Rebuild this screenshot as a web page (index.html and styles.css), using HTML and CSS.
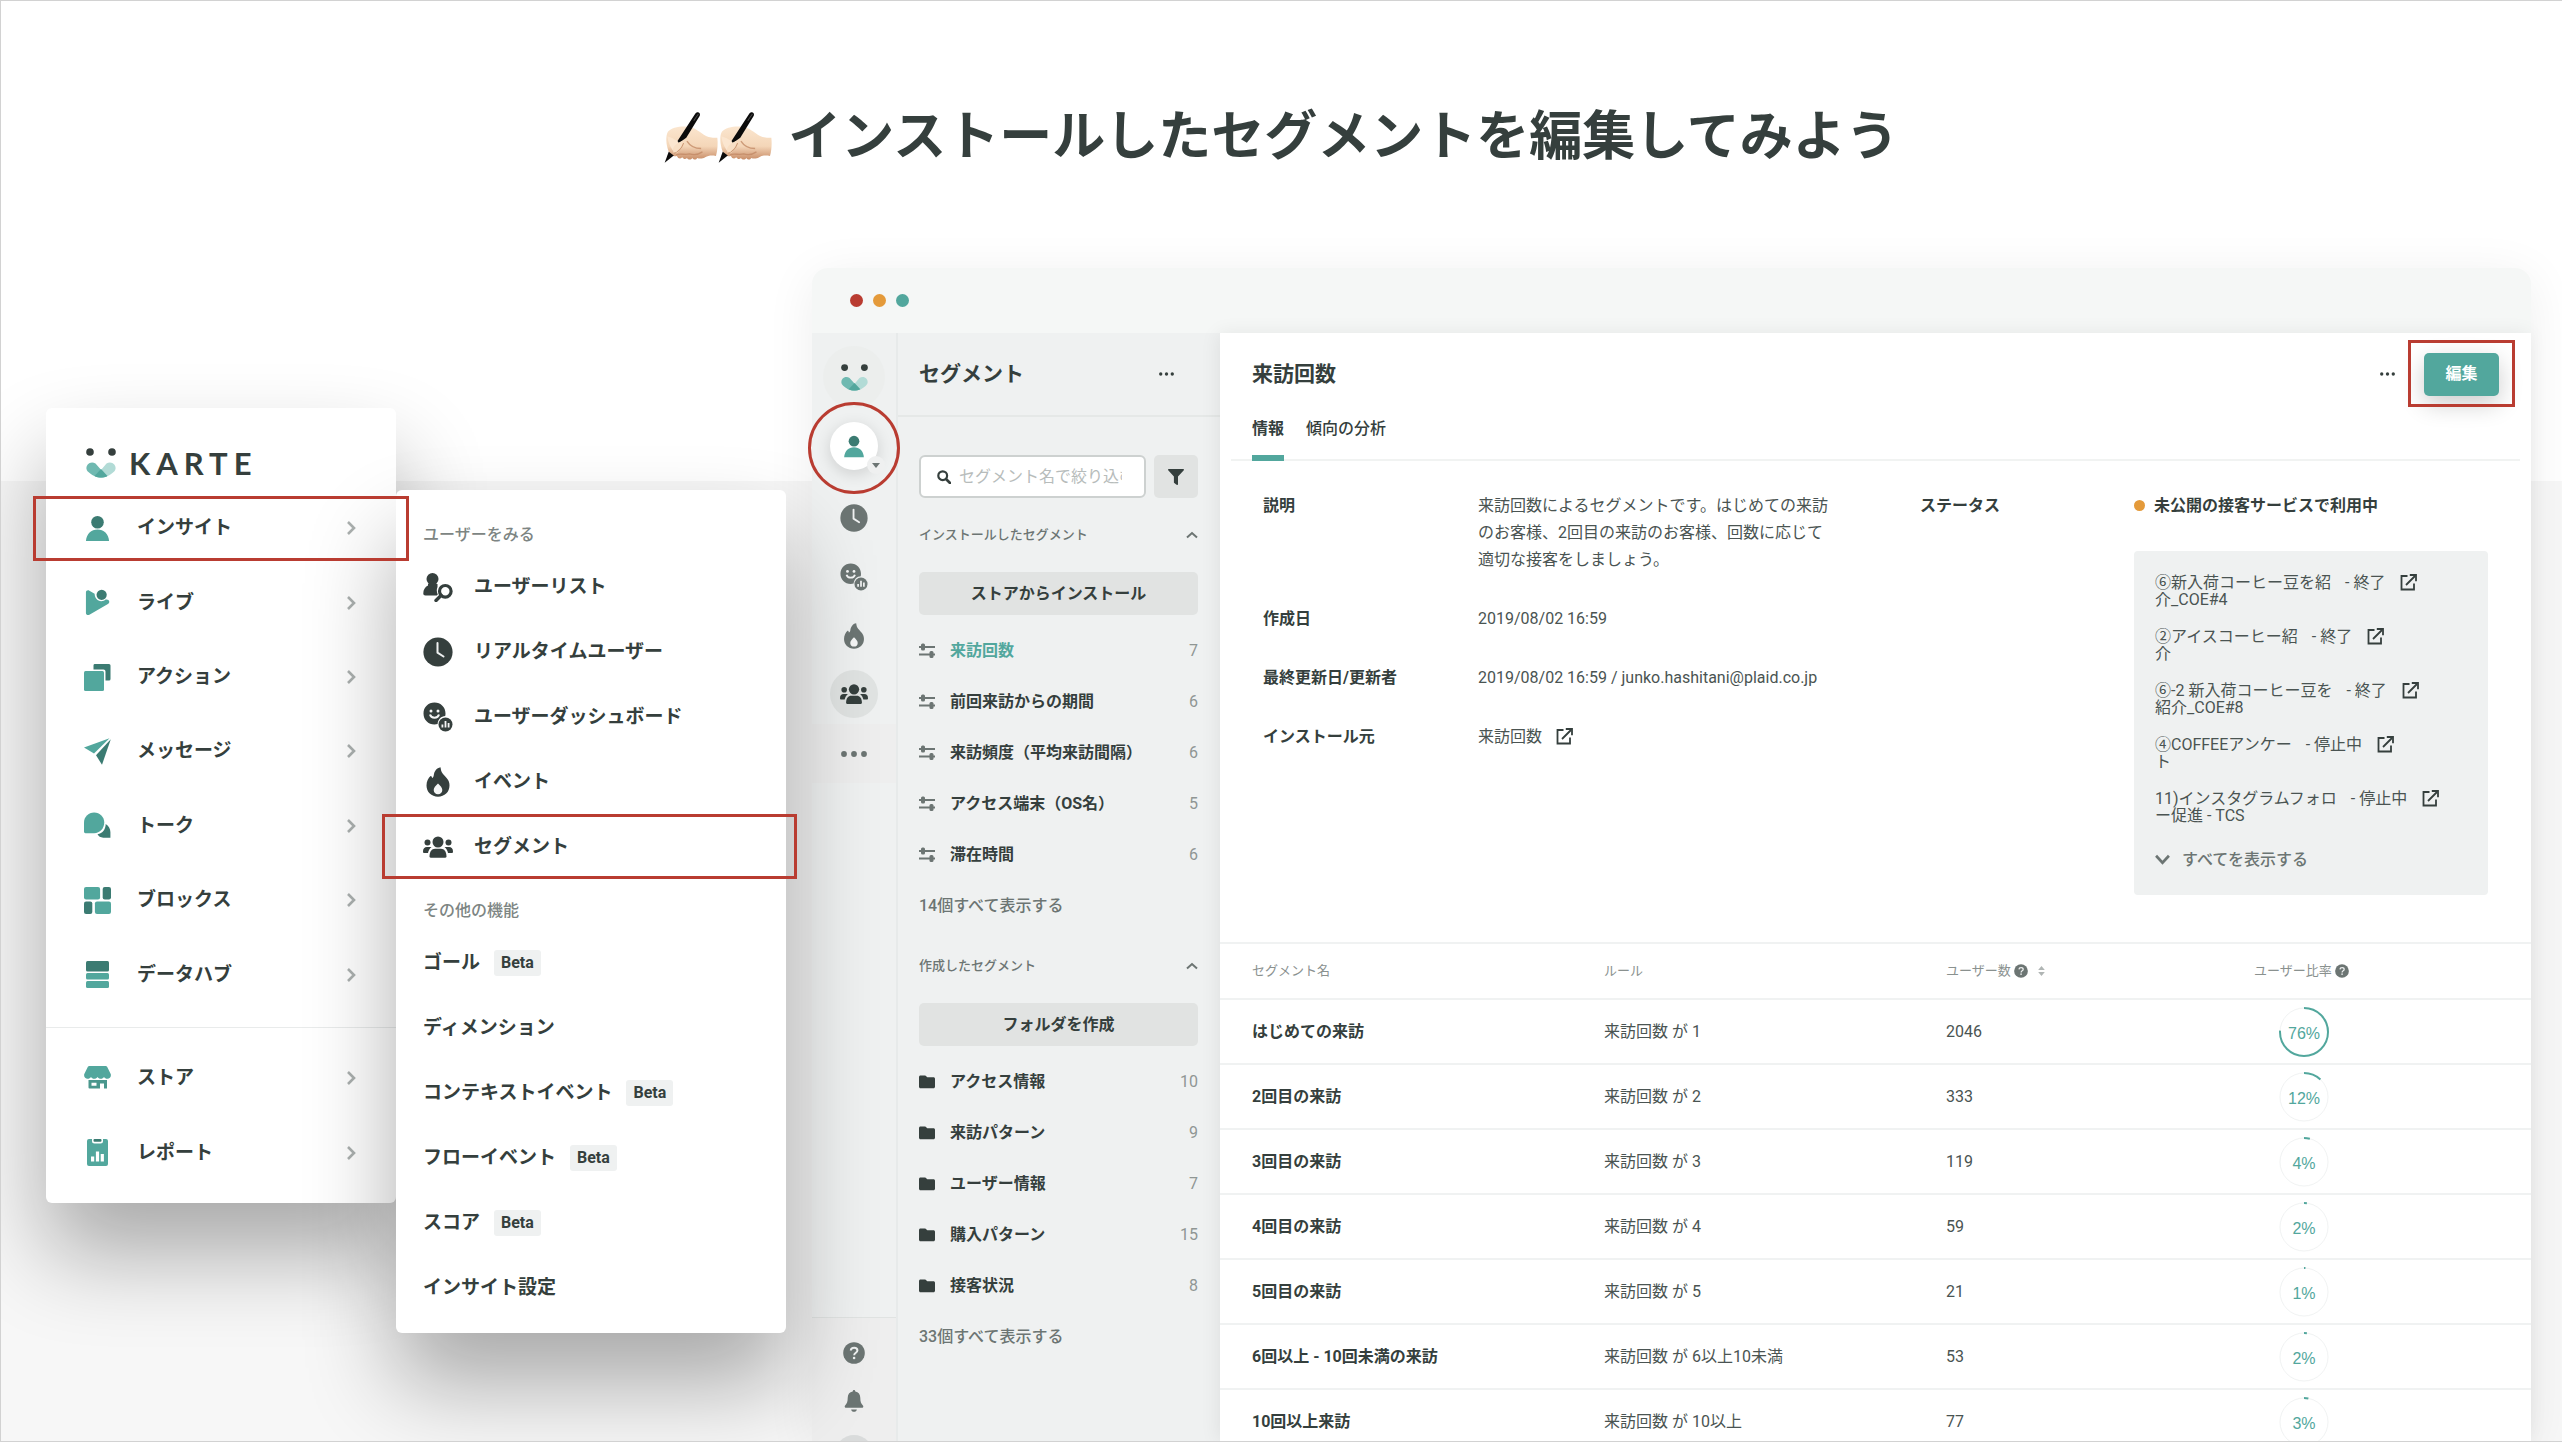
FILE: index.html
```html
<!DOCTYPE html>
<html lang="ja">
<head>
<meta charset="utf-8">
<meta name="viewport" content="width=device-width, initial-scale=1">
<title>インストールしたセグメントを編集してみよう</title>
<link rel="stylesheet" href="styles.css">
</head>
<body>
<svg class="sprite" aria-hidden="true">
  <symbol id="smile" viewBox="0 0 30 30">
    <circle cx="4" cy="4" r="3.8" fill="#353f3d"/><circle cx="26" cy="4" r="3.8" fill="#353f3d"/>
    <path d="M20.5 15.6c2.500-2 6-1.400 7.800.8 2 2.600 1.700 5.600-.7 7.700C24.500 27 20.500 29.500 15 29.500c-2 0-4-.4-5.500-1z" fill="#b2dbd6"/>
    <path d="M9.500 15.600c-2.500-2-6-1.400-7.800.8-2 2.600-1.700 5.600.7 7.700C5.500 27 9.500 29.500 15 29.500c2 0 4-.4 5.900-1.100z" fill="#6fb9b1"/>
    <path d="M15 21l6.500 7c-4 2-9.500 2-13 0z" fill="#52a79d"/>
  </symbol>
  <symbol id="person" viewBox="0 0 24 28">
    <circle cx="12" cy="7.500" r="6.500" fill="#3b7b72"/>
    <path d="M0 27c.5-7.500 5.500-12 12-12s11.500 4.500 12 12z" fill="#52a79d"/>
  </symbol>
  <symbol id="live" viewBox="0 0 26 28">
    <path d="M1 3.500C1 1.500 3 .8 4.600 1.700L10 5c.2 4.500 3 7.600 6.800 7.600 2 0 3.500-.6 4.500-1.600 2-.6 3.700.5 3.900 2 .1 1.200-.4 2-1.400 2.600L4.600 26.700C3 27.600 1 26.800 1 24.800z" fill="#52a79d"/>
    <circle cx="17.300" cy="6" r="5.300" fill="#3b7b72"/>
  </symbol>
  <symbol id="action" viewBox="0 0 27 27">
    <path d="M10.500 0h14.500a1.500 1.500 0 0 1 1.500 1.500V15a1.500 1.500 0 0 1-1.500 1.500h-3.500V7.500a2 2 0 0 0-2-2H9.500V1.500A1.500 1.500 0 0 1 10.500 0z" fill="#3b7b72"/>
    <rect y="7" width="20" height="20" rx="1.500" fill="#52a79d"/>
  </symbol>
  <symbol id="message" viewBox="0 0 27 27">
    <path d="M0 9.500L25.500.3 10 15.500z" fill="#52a79d"/>
    <path d="M26.800 1.200L18 26.800l-6-9.600z" fill="#3b7b72"/>
  </symbol>
  <symbol id="talk" viewBox="0 0 28 27">
    <path d="M22.500 12c3 2 4.900 5 4.900 8.500v5.700H20c-3 0-5-1.500-6-3.500 5.500-1 8.500-5.500 8.500-10.700z" fill="#3b7b72"/>
    <path d="M10.500 0C16.500 0 21 4.500 21 10.500S16.500 21.500 10.500 21.500H1.500A1.500 1.500 0 0 1 0 20V10.500C0 4.500 4.500 0 10.500 0z" fill="#52a79d"/>
  </symbol>
  <symbol id="blocks" viewBox="0 0 26 26">
    <rect width="15.500" height="12" rx="2" fill="#52a79d"/><rect x="18" width="8" height="12" rx="2" fill="#3b7b72"/>
    <rect y="14" width="8" height="12" rx="2" fill="#3b7b72"/><rect x="10.500" y="14" width="15.500" height="12" rx="2" fill="#52a79d"/>
  </symbol>
  <symbol id="datahub" viewBox="0 0 23 27">
    <rect width="23" height="10.500" rx="1.500" fill="#3b7b72"/><rect y="12" width="23" height="6.500" rx="1.500" fill="#52a79d"/><rect y="20" width="23" height="7" rx="1.500" fill="#52a79d"/>
  </symbol>
  <symbol id="store" viewBox="0 0 27 23">
    <path d="M4.500 14h18.500v8.500h-3V17.500h-4v5H5.500a1 1 0 0 1-1-1zM7.500 16.800v3h5v-3z" fill="#4a978d" fill-rule="evenodd"/>
    <path d="M5.500 0h16c1 0 1.500.5 2 1.500L26.700 8c.8 2.500-1 4.800-3.300 4.800-1.500 0-2.700-.7-3.400-1.800-.7 1.100-1.900 1.800-3.200 1.800s-2.600-.7-3.300-1.800c-.7 1.100-1.900 1.800-3.300 1.800S7.700 12.100 7 11c-.7 1.100-1.900 1.800-3.400 1.800C1.300 12.800-.5 10.500.3 8L3.500 1.500C4 .5 4.500 0 5.500 0z" fill="#52a79d"/>
  </symbol>
  <symbol id="report" viewBox="0 0 21 27">
    <path d="M2 0h3v2a2.500 2.500 0 0 0 2.500 2.500h6A2.500 2.500 0 0 0 16 2V0h3a2 2 0 0 1 2 2v23a2 2 0 0 1-2 2H2a2 2 0 0 1-2-2V2a2 2 0 0 1 2-2z" fill="#52a79d"/>
    <rect x="6.500" width="8" height="2.800" rx="1" fill="#3b7b72"/>
    <path d="M4 17.500h3.200v5H4zM8.900 12.500h3.200v10H8.900zM13.700 15h3.200v7.500h-3.200z" fill="#fff"/>
  </symbol>
  <symbol id="chev-right" viewBox="0 0 10 16"><path d="M2 2l6 6-6 6" fill="none" stroke="#abb0af" stroke-width="2.600"/></symbol>
  <symbol id="chev-up" viewBox="0 0 12 8"><path d="M1 6.500l5-4.500 5 4.500" fill="none" stroke="currentColor" stroke-width="2"/></symbol>
  <symbol id="chev-down" viewBox="0 0 14 10"><path d="M1 1.500l6 6.500 6-6.500" fill="none" stroke="currentColor" stroke-width="2.500"/></symbol>
  <symbol id="userlist" viewBox="0 0 30 30">
    <circle cx="9.500" cy="7" r="6" fill="currentColor"/>
    <path d="M5 12h9.500v3c-1 2-1 5 .3 7.500l-1 1H2.500C1 23.500.3 22.800.3 21.500c0-3.800 1.700-6.500 4.700-8z" fill="currentColor"/>
    <circle cx="22.300" cy="19.300" r="5.800" fill="none" stroke="currentColor" stroke-width="3.200"/>
    <path d="M18 23.500l-5 5" stroke="currentColor" stroke-width="3.400" stroke-linecap="round"/>
  </symbol>
  <symbol id="clock" viewBox="0 0 30 30">
    <circle cx="15" cy="15" r="14.600" fill="currentColor"/>
    <path d="M14.500 6v9.700l6 3.800" fill="none" stroke="#eff1f1" stroke-width="2" stroke-linejoin="round" stroke-linecap="round"/>
  </symbol>
  <symbol id="dash" viewBox="0 0 30 30">
    <path d="M11.500.5c6.300 0 11 4.700 11 11 0 .9-.1 1.800-.3 2.600-4 .2-7.200 3.200-7.600 7.900-1 .3-2 .5-3.100.5-6.300 0-11-4.700-11-11s4.700-11 11-11z" fill="currentColor"/>
    <circle cx="8" cy="9" r="1.500" fill="#f5f6f6"/><circle cx="15" cy="9" r="1.500" fill="#f5f6f6"/>
    <path d="M7 12.500c1.200 4.200 7.800 4.200 9 0" fill="none" stroke="#f5f6f6" stroke-width="2"/>
    <circle cx="22.500" cy="22.500" r="7" fill="currentColor"/>
    <path d="M18.500 22.500h1.800v3h-1.800zM21.600 19h1.800v6.500h-1.800zM24.700 21h1.800v4.500h-1.800z" fill="#f5f6f6"/>
  </symbol>
  <symbol id="flame" viewBox="0 0 24 30">
    <path d="M14.500.3C15 3 15 4.500 17 7c3 3.500 6.500 5.800 6.500 11.500C23.500 25 18.500 29.700 12 29.700S.5 25 .5 18.500C.5 14.500 2.300 11 4.500 9c1 0 1.500.8 1.500 2 1-.3 1.600-1.300 1.800-3C8.300 4.500 10.500 1 14.500.3z" fill="currentColor"/>
    <path d="M12 16.500c2.500 2.500 4.300 4.300 4.300 6.500 0 2.500-1.800 4.200-4.300 4.200S7.700 25.500 7.700 23c0-2.200 1.800-4 4.300-6.500z" fill="#f5f6f6"/>
  </symbol>
  <symbol id="group" viewBox="0 0 30 22">
    <circle cx="15" cy="6" r="5.500" fill="currentColor"/>
    <path d="M6.500 20.500C6.500 15.500 9 12.800 12 12.800h6c3 0 5.500 2.700 5.500 7.700 0 .7-.5 1.200-1.200 1.200H7.700c-.7 0-1.200-.5-1.200-1.200z" fill="currentColor"/>
    <circle cx="4.500" cy="6.500" r="3" fill="currentColor"/><circle cx="25.500" cy="6.500" r="3" fill="currentColor"/>
    <path d="M0 15.500C0 12.500 1.500 11 4 11h4.500C6.500 12.500 5.500 14.500 5 17H1.300C.5 17 0 16.500 0 15.500zM30 15.500C30 12.500 28.500 11 26 11h-4.500c2 1.500 3 3.500 3.500 6h3.700c.8 0 1.300-.5 1.300-1.500z" fill="currentColor"/>
  </symbol>
  <symbol id="dots" viewBox="0 0 26 6"><circle cx="3" cy="3" r="2.900" fill="currentColor"/><circle cx="13" cy="3" r="2.900" fill="currentColor"/><circle cx="23" cy="3" r="2.900" fill="currentColor"/></symbol>
  <symbol id="search" viewBox="0 0 14 14"><circle cx="5.700" cy="5.700" r="4.400" fill="none" stroke="currentColor" stroke-width="2.200"/><path d="M9 9l4 4" stroke="currentColor" stroke-width="2.600" stroke-linecap="round"/></symbol>
  <symbol id="filter" viewBox="0 0 16 16"><path d="M.8 0h14.400c.8 0 1 .8.6 1.300L10 7.500V15c0 .8-.8 1.200-1.500.8L6.300 14c-.3-.2-.4-.5-.4-.8V7.500L.2 1.300C-.2.8 0 0 .8 0z" fill="currentColor"/></symbol>
  <symbol id="sliders" viewBox="0 0 16 16"><path d="M0 4h16M0 11.500h16" stroke="currentColor" stroke-width="2"/><rect x="2" y=".5" width="4" height="7" rx="1.500" fill="currentColor"/><rect x="10.500" y="8" width="4" height="7" rx="1.500" fill="currentColor"/></symbol>
  <symbol id="folder" viewBox="0 0 16 13"><path d="M1.500 0h4.800l2 1.800h6.200c.8 0 1.500.6 1.500 1.500v8c0 .9-.7 1.500-1.500 1.500h-13C.7 12.800 0 12.200 0 11.300V1.500C0 .6.700 0 1.500 0z" fill="currentColor"/></symbol>
  <symbol id="external" viewBox="0 0 17 17"><path d="M7.500 2H1.500v13.500h12.500V9.500M6 11L15 2" fill="none" stroke="currentColor" stroke-width="1.800"/><path d="M9.800 1H16v6.200" fill="none" stroke="currentColor" stroke-width="1.800"/></symbol>
  <symbol id="help" viewBox="0 0 22 22"><circle cx="11" cy="11" r="10.800" fill="currentColor"/><path d="M7.800 8.500c.2-3.700 6.600-3.700 6.600 0 0 2.300-3.200 2.200-3.200 4.700" fill="none" stroke="#eff1f1" stroke-width="2"/><circle cx="11.100" cy="16" r="1.300" fill="#eff1f1"/></symbol>
  <symbol id="bell" viewBox="0 0 18 21"><path d="M9 0c.8 0 1.200.6 1.200 1.500C13.300 2 15 4.300 15 7.500c0 4 .8 5.500 2.500 7.200.8 1 .3 2.300-1 2.300h-15c-1.300 0-1.800-1.300-1-2.300C2.200 13 3 11.500 3 7.500c0-3.200 1.700-5.500 4.800-6C7.800.6 8.200 0 9 0zM6.300 18.500h5.400C11.500 21.500 6.500 21.500 6.300 18.500z" fill="currentColor"/></symbol>
  <symbol id="sort" viewBox="0 0 8 12"><path d="M4 0l4 4.800H0zM4 12L0 7.200h8z" fill="currentColor"/></symbol>
  <linearGradient id="skin" x1="0" y1="0" x2="0" y2="1"><stop offset="0" stop-color="#fbe6cf"/><stop offset=".6" stop-color="#f4d6b8"/><stop offset="1" stop-color="#c98e69"/></linearGradient>
  <symbol id="writing" viewBox="0 0 160 160">
    <path d="M14 124C6 104 4 76 12 64 22 52 50 46 78 50 100 56 112 72 132 80c10 3 20 2 26 2 2 16 1 38-4 54-12-2-22-2-32 4-10 6-18 4-24 2-2 6-10 6-14 0-4 6-12 6-16 0-4 5-10 4-14-2-6 6-12 4-16-4-10 4-20-2-24-12z" fill="url(#skin)"/>
    <path d="M36 132c14-4 26 2 40-2 12 4 26 2 38-6M68 92c10 16 24 22 42 22" fill="none" stroke="#c08763" stroke-width="4" opacity=".75"/>
    <path d="M10 78c2 18 8 30 16 42l36-36C46 92 36 92 26 84z" fill="#fbe6d0"/>
    <path d="M40 92L92 12c5-9 18-5 14 5L66 82 44 98z" fill="#0b0b0b"/>
    <path d="M28 126c-6-18 8-26 26-34 6 12-2 26-16 36z" fill="#f8dfc5"/>
    <path d="M30 128c14-4 22-14 28-30" fill="none" stroke="#c9946f" stroke-width="3"/>
    <path d="M14 124l15 11L2 156z" fill="#0b0b0b"/>
    <path d="M88 32l14-20" stroke="#4a4a4a" stroke-width="3"/>
  </symbol>
</svg>

<div class="slide">
  <h1 class="title"><span class="hands"><svg><use href="#writing"/></svg><svg><use href="#writing"/></svg></span>インストールしたセグメントを編集してみよう</h1>

  <div class="stage">
    <nav class="card menu" aria-label="メインメニュー">
      <div class="brand"><svg><use href="#smile"/></svg><span class="wordmark">KARTE</span></div>
      <div class="menu-list menu-main">
        <a href="#" class="marked"><svg class="ic"><use href="#person"/></svg><span>インサイト</span><svg class="chev"><use href="#chev-right"/></svg></a>
        <a href="#"><svg class="ic"><use href="#live"/></svg><span>ライブ</span><svg class="chev"><use href="#chev-right"/></svg></a>
        <a href="#"><svg class="ic"><use href="#action"/></svg><span>アクション</span><svg class="chev"><use href="#chev-right"/></svg></a>
        <a href="#"><svg class="ic"><use href="#message"/></svg><span>メッセージ</span><svg class="chev"><use href="#chev-right"/></svg></a>
        <a href="#"><svg class="ic"><use href="#talk"/></svg><span>トーク</span><svg class="chev"><use href="#chev-right"/></svg></a>
        <a href="#"><svg class="ic"><use href="#blocks"/></svg><span>ブロックス</span><svg class="chev"><use href="#chev-right"/></svg></a>
        <a href="#"><svg class="ic"><use href="#datahub"/></svg><span>データハブ</span><svg class="chev"><use href="#chev-right"/></svg></a>
      </div>
      <div class="menu-list menu-sub">
        <a href="#"><svg class="ic"><use href="#store"/></svg><span>ストア</span><svg class="chev"><use href="#chev-right"/></svg></a>
        <a href="#"><svg class="ic"><use href="#report"/></svg><span>レポート</span><svg class="chev"><use href="#chev-right"/></svg></a>
      </div>
    </nav>

    <nav class="card submenu" aria-label="インサイト">
      <h2>ユーザーをみる</h2>
      <div class="submenu-list with-icons">
        <a href="#"><svg><use href="#userlist"/></svg><span>ユーザーリスト</span></a>
        <a href="#"><svg><use href="#clock"/></svg><span>リアルタイムユーザー</span></a>
        <a href="#"><svg><use href="#dash"/></svg><span>ユーザーダッシュボード</span></a>
        <a href="#"><svg><use href="#flame"/></svg><span>イベント</span></a>
        <a href="#" class="marked"><svg><use href="#group"/></svg><span>セグメント</span></a>
      </div>
      <h2>その他の機能</h2>
      <div class="submenu-list">
        <a href="#"><span>ゴール</span><em>Beta</em></a>
        <a href="#"><span>ディメンション</span></a>
        <a href="#"><span>コンテキストイベント</span><em>Beta</em></a>
        <a href="#"><span>フローイベント</span><em>Beta</em></a>
        <a href="#"><span>スコア</span><em>Beta</em></a>
        <a href="#"><span>インサイト設定</span></a>
      </div>
    </nav>

    <div class="browser">
      <div class="chrome"><i class="red"></i><i class="amber"></i><i class="teal"></i></div>
      <div class="app">
        <nav class="rail" aria-label="ショートカット">
          <a href="#" class="rail-logo" aria-label="KARTE"><svg><use href="#smile"/></svg></a>
          <a href="#" class="rail-user" aria-label="インサイト"><svg><use href="#person"/></svg><i class="caret"></i></a>
          <div class="rail-items">
            <a href="#" aria-label="リアルタイムユーザー"><svg class="r28"><use href="#clock"/></svg></a>
            <a href="#" aria-label="ユーザーダッシュボード"><svg class="r28"><use href="#dash"/></svg></a>
            <a href="#" aria-label="イベント"><svg class="r26"><use href="#flame"/></svg></a>
            <a href="#" class="current" aria-label="セグメント"><svg class="r28"><use href="#group"/></svg></a>
            <a href="#" class="more" aria-label="その他"><svg class="r26"><use href="#dots"/></svg></a>
          </div>
          <div class="rail-foot">
            <a href="#" aria-label="ヘルプ"><svg class="r22"><use href="#help"/></svg></a>
            <a href="#" aria-label="通知"><svg class="r22"><use href="#bell"/></svg></a>
            <i class="avatar"></i>
          </div>
        </nav>

        <aside class="side">
          <header><h2>セグメント</h2><button type="button" class="dots" aria-label="メニュー"><svg><use href="#dots"/></svg></button></header>
          <div class="side-body">
            <div class="search-row">
              <label class="search"><svg><use href="#search"/></svg><input type="text" aria-label="セグメント名で絞り込む" placeholder="セグメント名で絞り込む"></label>
              <button type="button" class="filter" aria-label="フィルター"><svg><use href="#filter"/></svg></button>
            </div>
            <section>
              <h3><span>インストールしたセグメント</span><svg><use href="#chev-up"/></svg></h3>
              <button type="button" class="wide">ストアからインストール</button>
              <ul>
                <li><a href="#" class="on"><svg><use href="#sliders"/></svg><span>来訪回数</span><b>7</b></a></li>
                <li><a href="#"><svg><use href="#sliders"/></svg><span>前回来訪からの期間</span><b>6</b></a></li>
                <li><a href="#"><svg><use href="#sliders"/></svg><span>来訪頻度（平均来訪間隔）</span><b>6</b></a></li>
                <li><a href="#"><svg><use href="#sliders"/></svg><span>アクセス端末（OS名）</span><b>5</b></a></li>
                <li><a href="#"><svg><use href="#sliders"/></svg><span>滞在時間</span><b>6</b></a></li>
                <li><a href="#" class="all">14個すべて表示する</a></li>
              </ul>
            </section>
            <section>
              <h3><span>作成したセグメント</span><svg><use href="#chev-up"/></svg></h3>
              <button type="button" class="wide">フォルダを作成</button>
              <ul class="folders">
                <li><a href="#"><svg><use href="#folder"/></svg><span>アクセス情報</span><b>10</b></a></li>
                <li><a href="#"><svg><use href="#folder"/></svg><span>来訪パターン</span><b>9</b></a></li>
                <li><a href="#"><svg><use href="#folder"/></svg><span>ユーザー情報</span><b>7</b></a></li>
                <li><a href="#"><svg><use href="#folder"/></svg><span>購入パターン</span><b>15</b></a></li>
                <li><a href="#"><svg><use href="#folder"/></svg><span>接客状況</span><b>8</b></a></li>
                <li><a href="#" class="all">33個すべて表示する</a></li>
              </ul>
            </section>
          </div>
        </aside>

        <main class="main">
          <header><h2>来訪回数</h2><button type="button" class="dots" aria-label="メニュー"><svg><use href="#dots"/></svg></button><span class="edit-wrap"><button type="button" class="edit">編集</button></span></header>
          <nav class="tabs"><a href="#" class="on">情報</a><a href="#">傾向の分析</a></nav>
          <div class="details">
            <dl class="facts">
              <dt>説明</dt><dd>来訪回数によるセグメントです。はじめての来訪のお客様、2回目の来訪のお客様、回数に応じて適切な接客をしましょう。</dd>
              <dt>作成日</dt><dd>2019/08/02 16:59</dd>
              <dt>最終更新日/更新者</dt><dd>2019/08/02 16:59 / junko.hashitani@plaid.co.jp</dd>
              <dt>インストール元</dt><dd><a href="#" class="ext">来訪回数<svg><use href="#external"/></svg></a></dd>
            </dl>
            <dl class="status">
              <dt>ステータス</dt>
              <dd>
                <p class="state"><i></i>未公開の接客サービスで利用中</p>
                <div class="services">
                  <ul>
                    <li><span>⑥新入荷コーヒー豆を紹<br>介_COE#4</span><a href="#">- 終了<svg><use href="#external"/></svg></a></li>
                    <li><span>②アイスコーヒー紹<br>介</span><a href="#">- 終了<svg><use href="#external"/></svg></a></li>
                    <li><span>⑥-2 新入荷コーヒー豆を<br>紹介_COE#8</span><a href="#">- 終了<svg><use href="#external"/></svg></a></li>
                    <li><span>④COFFEEアンケー<br>ト</span><a href="#">- 停止中<svg><use href="#external"/></svg></a></li>
                    <li><span>11)インスタグラムフォロ<br>ー促進 - TCS</span><a href="#">- 停止中<svg><use href="#external"/></svg></a></li>
                  </ul>
                  <button type="button" class="show-all"><svg><use href="#chev-down"/></svg>すべてを表示する</button>
                </div>
              </dd>
            </dl>
          </div>
          <table>
            <colgroup><col class="c-name"><col class="c-rule"><col class="c-count"><col></colgroup>
            <thead><tr><th>セグメント名</th><th>ルール</th><th><span class="th">ユーザー数<svg class="q"><use href="#help"/></svg><svg class="sort"><use href="#sort"/></svg></span></th><th><span class="th">ユーザー比率<svg class="q"><use href="#help"/></svg></span></th></tr></thead>
            <tbody>
              <tr><th scope="row">はじめての来訪</th><td>来訪回数 が 1</td><td>2046</td><td><svg class="ring" viewBox="0 0 50 50"><circle class="track" cx="25" cy="25" r="24"/><circle class="arc" cx="25" cy="25" r="24" pathLength="100" stroke-dasharray="76 100"/><text x="25" y="32">76%</text></svg></td></tr>
              <tr><th scope="row">2回目の来訪</th><td>来訪回数 が 2</td><td>333</td><td><svg class="ring" viewBox="0 0 50 50"><circle class="track" cx="25" cy="25" r="24"/><circle class="arc" cx="25" cy="25" r="24" pathLength="100" stroke-dasharray="12 100"/><text x="25" y="32">12%</text></svg></td></tr>
              <tr><th scope="row">3回目の来訪</th><td>来訪回数 が 3</td><td>119</td><td><svg class="ring" viewBox="0 0 50 50"><circle class="track" cx="25" cy="25" r="24"/><circle class="arc" cx="25" cy="25" r="24" pathLength="100" stroke-dasharray="4 100"/><text x="25" y="32">4%</text></svg></td></tr>
              <tr><th scope="row">4回目の来訪</th><td>来訪回数 が 4</td><td>59</td><td><svg class="ring" viewBox="0 0 50 50"><circle class="track" cx="25" cy="25" r="24"/><circle class="arc" cx="25" cy="25" r="24" pathLength="100" stroke-dasharray="2 100"/><text x="25" y="32">2%</text></svg></td></tr>
              <tr><th scope="row">5回目の来訪</th><td>来訪回数 が 5</td><td>21</td><td><svg class="ring" viewBox="0 0 50 50"><circle class="track" cx="25" cy="25" r="24"/><circle class="arc" cx="25" cy="25" r="24" pathLength="100" stroke-dasharray="1 100"/><text x="25" y="32">1%</text></svg></td></tr>
              <tr><th scope="row">6回以上 - 10回未満の来訪</th><td>来訪回数 が 6以上10未満</td><td>53</td><td><svg class="ring" viewBox="0 0 50 50"><circle class="track" cx="25" cy="25" r="24"/><circle class="arc" cx="25" cy="25" r="24" pathLength="100" stroke-dasharray="2 100"/><text x="25" y="32">2%</text></svg></td></tr>
              <tr><th scope="row">10回以上来訪</th><td>来訪回数 が 10以上</td><td>77</td><td><svg class="ring" viewBox="0 0 50 50"><circle class="track" cx="25" cy="25" r="24"/><circle class="arc" cx="25" cy="25" r="24" pathLength="100" stroke-dasharray="3 100"/><text x="25" y="32">3%</text></svg></td></tr>
            </tbody>
          </table>
        </main>
      </div>
    </div>
  </div>
</div>
</body>
</html>
```

FILE: styles.css
```css
:root {
  --ink: #353f3d;
  --text: #4a5452;
  --muted: #757d7b;
  --teal: #52a79d;
  --red: #b93c31;
  --panel: #eff1f1;
  --line: #f0f2f2;
}

* { box-sizing: border-box; }

body {
  margin: 0;
  color: var(--ink);
  font: 16px/24px Roboto, "Noto Sans CJK JP", sans-serif;
}

h1, h2, h3, ul, dl, dd, p { margin: 0; padding: 0; }
ul { list-style: none; }
a { color: inherit; text-decoration: none; }
button { border: 0; padding: 0; font: inherit; color: inherit; background: none; cursor: pointer; }
svg { flex: none; display: block; }
.sprite { position: absolute; width: 0; height: 0; }

.slide {
  display: flex;
  flex-direction: column;
  height: 100vh;
  overflow: hidden;
  border: 1px solid #d2d2d2;
  border-width: 1px 0 1px 1px;
  background: linear-gradient(#fff 480px, #f7f7f7 480px);
}

.title {
  display: flex;
  align-items: center;
  justify-content: center;
  gap: 16px;
  height: 267px;
  padding-top: 4px;
  flex: none;
  font-size: 53px;
  line-height: 80px;
  font-weight: 700;
}
.hands { display: flex; }
.hands svg { width: 54px; height: 54px; }

.stage {
  display: flex;
  align-items: flex-start;
  flex: 1;
  min-height: 0;
  padding: 0 31px 0 45px;
}

.card {
  position: relative;
  flex: none;
  background: #fff;
  border-radius: 6px;
  box-shadow: 0 50px 90px rgba(0, 0, 0, .32);
  font-size: 19px;
  font-weight: 700;
}

.menu { width: 350px; margin-top: 140px; padding-bottom: 13px; }
.brand { display: flex; align-items: center; gap: 13px; height: 83px; padding: 26px 0 0 40px; }
.brand svg { width: 30px; height: 30px; }
.wordmark { font-family: Lato, sans-serif; font-size: 31px; line-height: 32px; letter-spacing: 6px; }
.menu-list { display: flex; flex-direction: column; }
.menu-list a {
  position: relative;
  display: flex;
  align-items: center;
  flex: 1;
  padding: 0 40px 0 38px;
}
.menu-list .ic { width: 27px; height: 27px; }
.menu-list span { flex: 1; padding-left: 26px; }
.menu-list .chev { width: 10px; height: 16px; }
.menu-main { height: 537px; padding-bottom: 15px; border-bottom: 1px solid #e9ebeb; }
.menu-sub { height: 162px; padding-top: 12px; }

/* Red highlight frames sit above both cards. */
.marked::after {
  content: "";
  position: absolute;
  z-index: 3;
  inset: 5px -13px 4px;
  border: 3px solid var(--red);
}

.submenu { z-index: 1; width: 390px; margin-top: 222px; padding: 33px 0 13px; }
.submenu h2 { padding: 0 27px; font-size: 16px; font-weight: 500; color: #7d8583; }
.submenu h2 + .submenu-list { margin-top: 7px; }
.submenu-list + h2 { margin-top: 20px; }
.submenu-list a { position: relative; display: flex; align-items: center; gap: 14px; height: 65px; padding: 0 27px; }
.with-icons a { gap: 21px; }
.submenu-list svg { width: 30px; height: 30px; }
.submenu-list .marked::after { inset: 0 -11px 0 -14px; }
.submenu-list em {
  padding: 0 7px;
  border-radius: 3px;
  background: var(--panel);
  font-size: 16px;
  line-height: 26px;
  font-style: normal;
  font-weight: 700;
}

.browser {
  display: flex;
  flex-direction: column;
  align-self: stretch;
  flex: 1;
  min-width: 0;
  margin-left: 26px;
  border-radius: 16px 16px 0 0;
  background: #f5f7f6;
  box-shadow: 0 8px 50px rgba(0, 0, 0, .07);
}
.chrome { display: flex; align-items: center; gap: 10px; flex: none; height: 65px; padding-left: 38px; }
.chrome i { width: 13px; height: 13px; border-radius: 50%; }
.red { background: var(--red); }
.amber { background: #e49a3a; }
.teal { background: var(--teal); }

.app { display: flex; flex: 1; min-height: 0; }

.rail {
  display: flex;
  flex-direction: column;
  align-items: center;
  flex: none;
  width: 86px;
  padding-top: 13px;
  border-right: 2px solid #e7eaea;
  background: var(--panel);
  color: #6c7573;
}
.rail a { display: flex; align-items: center; justify-content: center; }
.rail-logo { width: 62px; height: 62px; border-radius: 50%; background: #eceeed; }
.rail-logo svg { width: 27px; height: 27px; }
.rail-user {
  position: relative;
  z-index: 2;
  width: 48px;
  height: 48px;
  margin-top: 14px;
  border-radius: 50%;
  background: #fff;
  box-shadow: 0 4px 16px rgba(0, 0, 0, .14);
}
.rail-user svg { width: 20px; height: 23px; }
.rail-user::after {
  content: "";
  position: absolute;
  inset: -20px -22px -24px;
  border: 3px solid var(--red);
  border-radius: 50%;
}
.caret {
  position: absolute;
  right: -7px;
  bottom: -4px;
  display: flex;
  align-items: center;
  justify-content: center;
  width: 18px;
  height: 18px;
  border-radius: 50%;
  background: #eff0f0;
}
.caret::before { content: ""; border: 4px solid transparent; border-top: 5px solid #6c7573; border-bottom: 0; }
.rail-items { width: 100%; margin-top: 18px; }
.rail-items a { height: 59px; }
.rail-items .current { width: 48px; height: 48px; margin: 5px auto 6px; border-radius: 50%; background: #e0e3e2; color: var(--ink); }
.rail-items .more { background: #eeeeee; }
.r28 { width: 28px; height: 28px; }
.r26 { width: 26px; height: 26px; }
.r22 { width: 22px; height: 22px; }
.rail-foot {
  width: 100%;
  height: 124px;
  margin-top: auto;
  padding-top: 11px;
  border-top: 1px solid #e0e3e2;
  overflow: hidden;
  background: #eeeeee;
}
.rail-foot a { height: 48px; }
.avatar { display: block; width: 38px; height: 38px; margin: 10px auto 0; border-radius: 50%; background: #d9dbdb; }

.side { flex: none; width: 322px; background: var(--panel); }
.side header {
  display: flex;
  align-items: center;
  justify-content: space-between;
  height: 84px;
  padding: 0 46px 0 21px;
  border-bottom: 2px solid #e5e8e7;
}
.side h2, .main h2 { font-size: 21px; font-weight: 700; }
.dots svg { width: 15px; height: 4px; }
.side-body { padding: 38px 22px 0 21px; }
.search-row { display: flex; gap: 8px; margin-bottom: 17px; }
.search {
  display: flex;
  align-items: center;
  gap: 8px;
  flex: 1;
  min-width: 0;
  height: 43px;
  padding: 0 22px 0 16px;
  border: 2px solid #cdd1d0;
  border-radius: 6px;
  background: #fff;
}
.search svg { width: 14px; height: 14px; }
.search input { flex: 1; min-width: 0; padding: 0; border: 0; outline: 0; background: none; font: inherit; }
.search input::placeholder { color: #b7bcbb; opacity: 1; }
.filter { display: flex; align-items: center; justify-content: center; width: 44px; border-radius: 5px; background: #e1e3e2; }
.filter svg { width: 16px; height: 16px; }
.side section { margin-bottom: 15px; color: #6c7573; }
.side h3 { display: flex; align-items: center; justify-content: space-between; height: 40px; font-size: 13px; font-weight: 500; }
.side h3 svg { width: 12px; height: 8px; }
.wide {
  width: 100%;
  height: 43px;
  margin: 17px 0 10px;
  border-radius: 5px;
  background: #e1e3e2;
  color: var(--ink);
  font-weight: 700;
}
.side li a { display: flex; align-items: center; height: 51px; }
.side li svg { width: 16px; height: 16px; }
.folders svg { color: var(--ink); }
.side li span { flex: 1; padding-left: 15px; color: var(--ink); font-weight: 700; }
.side .on span { color: var(--teal); }
.side li b { font-weight: 400; color: #8f9694; }
.side .all { font-weight: 500; }

.main {
  flex: 1;
  min-width: 0;
  overflow: hidden;
  background: #fff;
  box-shadow: -2px 0 18px rgba(0, 0, 0, .07);
}
.main header { display: flex; align-items: center; height: 82px; padding: 0 32px; }
.main h2 { flex: 1; }
.edit-wrap { position: relative; margin-left: 29px; }
.edit-wrap::after { content: ""; position: absolute; inset: -13px -16px -11px; border: 3px solid var(--red); pointer-events: none; }
.edit {
  display: block;
  width: 75px;
  height: 43px;
  border-radius: 5px;
  background: var(--teal);
  box-shadow: 0 8px 24px rgba(0, 0, 0, .2);
  color: #fff;
  font-weight: 700;
}
.tabs {
  display: flex;
  gap: 22px;
  margin: 0 11px;
  padding: 0 21px;
  box-shadow: inset 0 -2px #f1f3f2;
  line-height: 28px;
  font-weight: 500;
}
.tabs a { padding-bottom: 12px; border-bottom: 6px solid transparent; }
.tabs .on { border-color: var(--teal); font-weight: 700; }

.details { display: flex; padding: 31px 43px 47px; line-height: 27px; }
dt { font-weight: 700; }
.facts {
  display: grid;
  grid-template-columns: 215px 1fr;
  align-content: start;
  gap: 32px 0;
  flex: 1;
}
.facts dd { max-width: 358px; color: var(--text); }
.ext { display: flex; align-items: center; gap: 14px; }
.ext svg, .services li svg { width: 17px; height: 17px; color: var(--ink); }
.status { display: grid; grid-template-columns: 214px 354px; }
.state { display: flex; align-items: center; gap: 9px; font-weight: 700; }
.state i { width: 11px; height: 11px; border-radius: 50%; background: #e49a3a; }
.services { margin-top: 32px; padding: 23px 21px 22px; border-radius: 4px; background: var(--panel); color: var(--text); }
.services ul { display: grid; gap: 20px; line-height: 17px; }
.services li { display: flex; gap: 14px; }
.services li a { display: flex; gap: 15px; height: 17px; }
.show-all { display: flex; align-items: center; gap: 12px; margin-top: 22px; font-weight: 500; color: #6c7573; }
.show-all svg { width: 15px; height: 11px; }

table { width: 100%; border-collapse: collapse; table-layout: fixed; border-top: 2px solid var(--line); }
.c-name { width: 384px; }
.c-rule { width: 342px; }
.c-count { width: 308px; }
th, td { padding: 0; text-align: left; color: var(--text); }
tr > :first-child { padding-left: 32px; }
tr { height: 65px; border-bottom: 2px solid var(--line); }
thead tr { height: 56px; }
thead th { font-size: 13px; font-weight: 400; color: #8a918f; }
tbody th { color: var(--ink); font-weight: 700; }
.th { display: flex; align-items: center; }
.q { width: 14px; height: 14px; margin-left: 3px; color: #6c7573; }
.sort { width: 7px; height: 10px; margin-left: 10px; color: #b0b5b4; }
.ring { width: 50px; height: 50px; margin-left: 25px; }
.ring circle { fill: none; stroke-width: 2; }
.ring .track { stroke: #f1f3f3; stroke-width: 1; }
.ring .arc { stroke: var(--teal); transform: rotate(-90deg); transform-origin: 25px 25px; }
.ring text { fill: var(--teal); font: 16px "Liberation Sans", sans-serif; text-anchor: middle; }
```
